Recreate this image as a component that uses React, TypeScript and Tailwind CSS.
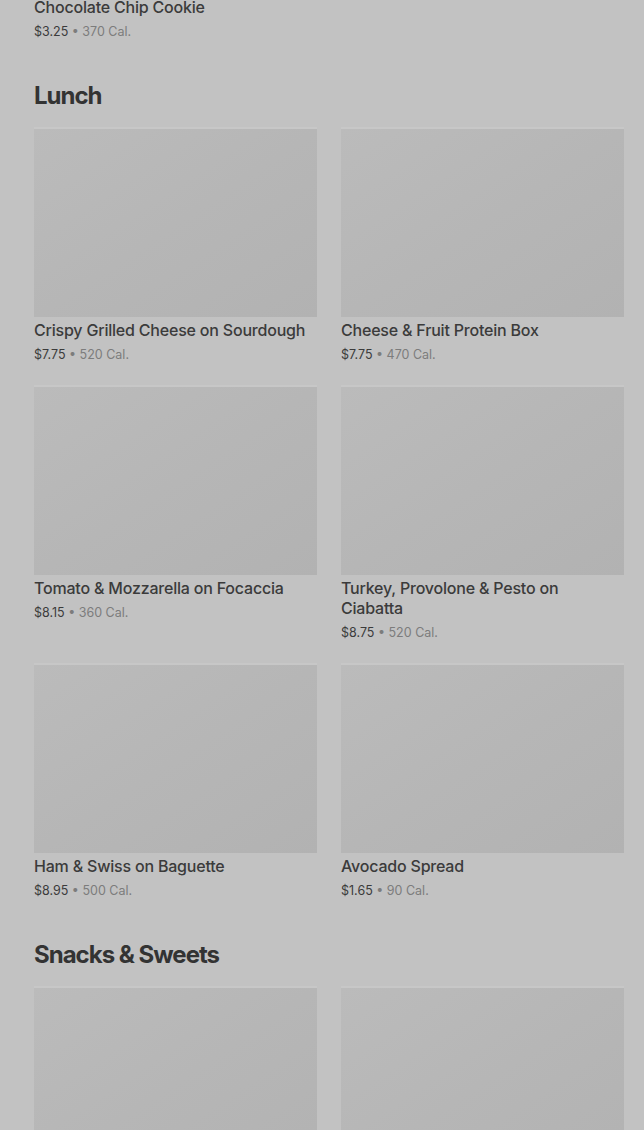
type Item = { name: string; price: string; cal: string };

const lunch: Item[] = [
  { name: "Crispy Grilled Cheese on Sourdough", price: "$7.75", cal: "520 Cal." },
  { name: "Cheese & Fruit Protein Box", price: "$7.75", cal: "470 Cal." },
  { name: "Tomato & Mozzarella on Focaccia", price: "$8.15", cal: "360 Cal." },
  { name: "Turkey, Provolone & Pesto on Ciabatta", price: "$8.75", cal: "520 Cal." },
  { name: "Ham & Swiss on Baguette", price: "$8.95", cal: "500 Cal." },
  { name: "Avocado Spread", price: "$1.65", cal: "90 Cal." },
];

const snacks: Item[] = [
  { name: "Kettle Chips", price: "$1.95", cal: "150 Cal." },
  { name: "Madeleines", price: "$2.45", cal: "210 Cal." },
];

const ItemCard = ({ name, price, cal }: Item) => (
  <div className="flex flex-col">
    <div className="h-[188px] w-full bg-gradient-to-br from-[#bbbbbb] via-[#b6b6b6] to-[#b2b2b2] shadow-[0_-2px_0_#c7c7c7]" />
    <p className="mt-[3px] text-[16px] leading-5 font-medium tracking-[-0.2px] text-[#3b3b3b]">{name}</p>
    <p className="mt-[6px] text-[12.5px] leading-[18px] text-[#3b3b3b]">
      {price} <span className="text-[#7c7c7c]">•</span>{" "}
      <span className="text-[#7c7c7c]">{cal}</span>
    </p>
  </div>
);

const Section = ({ title, items }: { title: string; items: Item[] }) => (
  <section className="mt-[39px]">
    <h2 className="text-[24px] leading-8 font-bold tracking-[-1px] text-[#333333]">{title}</h2>
    <div className="mt-[17px] grid grid-cols-2 gap-x-6 gap-y-[23px]">
      {items.map((it) => (
        <ItemCard key={it.name} {...it} />
      ))}
    </div>
  </section>
);

export default function App() {
  return (
    <div
      className="h-[1130px] w-[644px] overflow-hidden bg-[#c2c2c2] pl-[34px] pr-5"
      style={{ fontFamily: "Inter, 'Noto Sans', sans-serif" }}
    >
      <div className="-mt-[194px] grid grid-cols-2 gap-x-6">
        <ItemCard name="Chocolate Chip Cookie" price="$3.25" cal="370 Cal." />
      </div>
      <Section title="Lunch" items={lunch} />
      <Section title="Snacks & Sweets" items={snacks} />
    </div>
  );
}
